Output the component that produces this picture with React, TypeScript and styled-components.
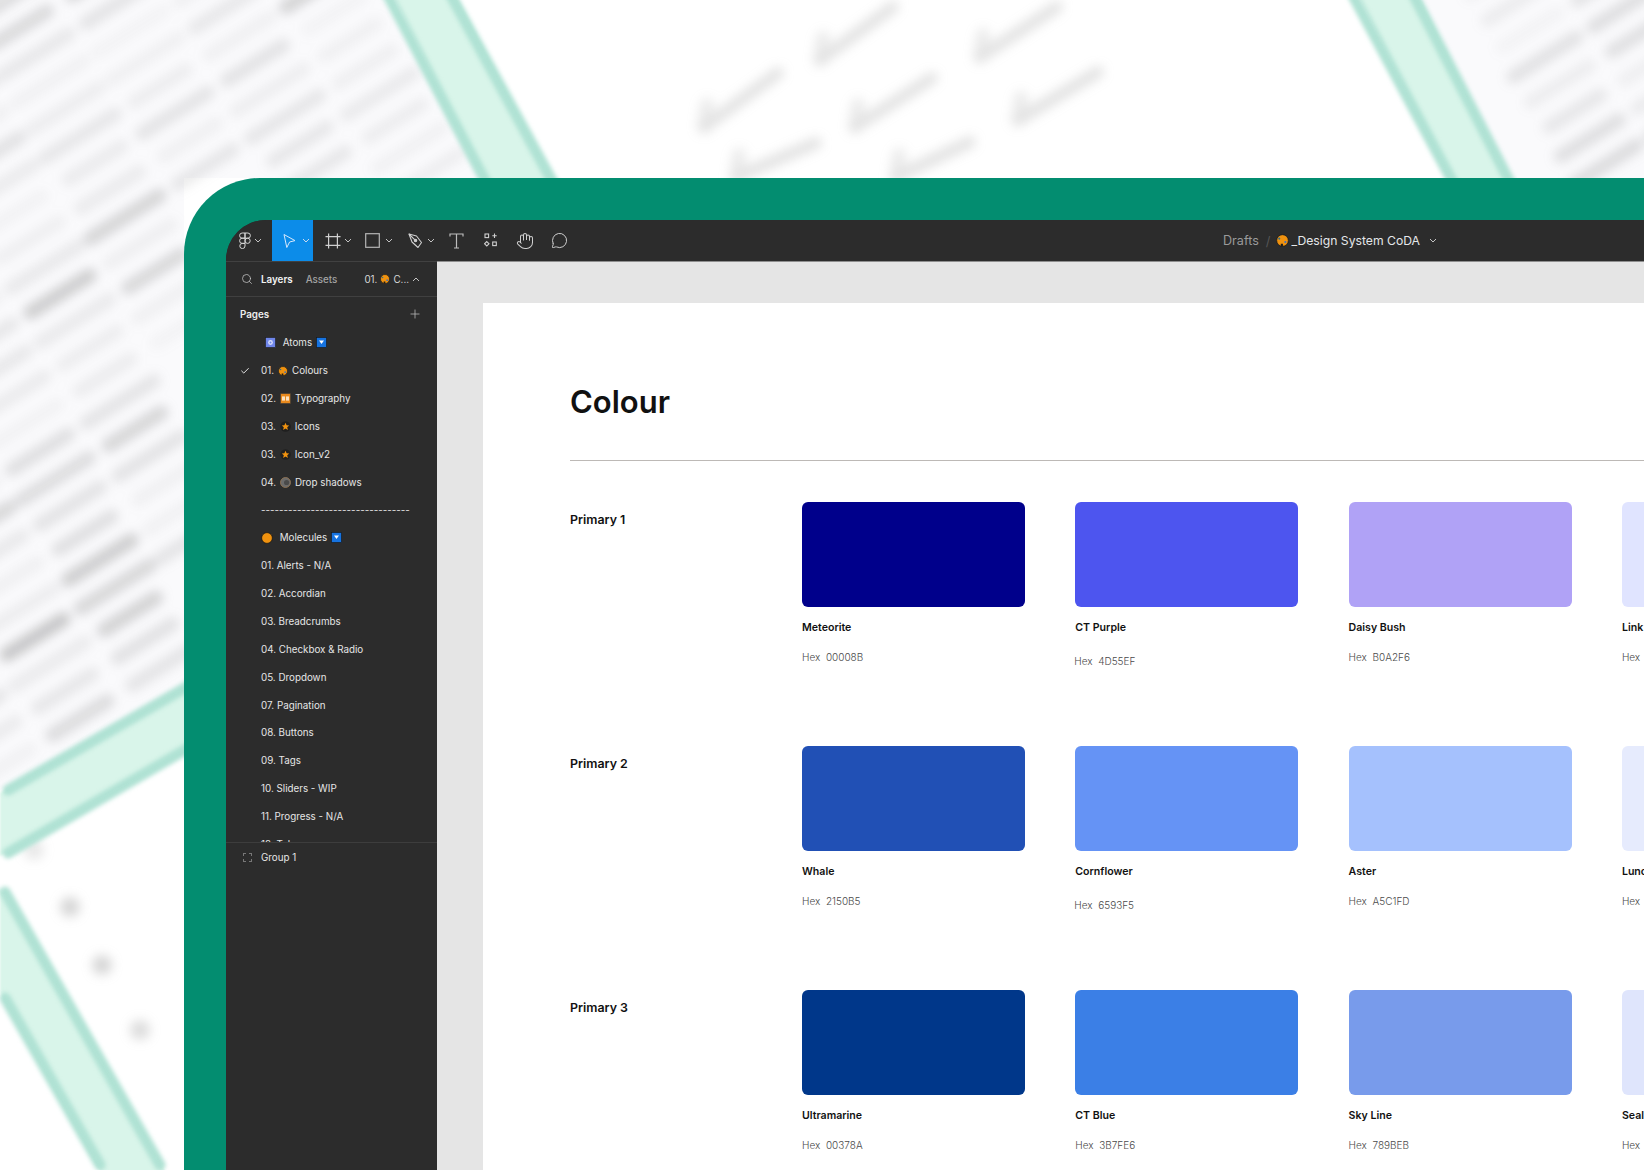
import { ReactNode } from "react";
import styled, { createGlobalStyle } from "styled-components";
import { Hand, MessageCircle, Search, Plus, Check } from "lucide-react";

const GlobalStyle = createGlobalStyle`
  html, body {
    margin: 0;
    padding: 0;
    background: #ffffff;
  }
  body {
    width: 1644px;
    height: 1170px;
    overflow: hidden;
    font-family: Inter, "Liberation Sans", sans-serif;
  }
  * { box-sizing: border-box; }
`;

/* ---------- blurred backdrop ---------- */

const noise = (a: number, b: number) => {
  const v = Math.sin(a * 127.1 + b * 311.7) * 43758.5453;
  return v - Math.floor(v);
};

const inLeftZone = (x: number, y: number) => {
  if (y < 178) return x < 378 + 0.56 * y;
  return x < 200 && y < 780 - 0.556 * x;
};
const inRightZone = (x: number, y: number) => x > 1432 + 0.54 * y && y < 190;

const capsules = () => {
  const out: ReactNode[] = [];
  for (let i = -8; i < 22; i++) {
    for (let j = -22; j < 42; j++) {
      const cx = 105 + i * 80 + j * 15;
      const cy = 375 - i * 50 + j * 27;
      if (cy < -30 || !(inLeftZone(cx, cy) || inRightZone(cx, cy))) continue;
      const len = 30 + noise(i, j) * 12;
      out.push(
        <line
          key={`${i}-${j}`}
          x1={cx - len * 0.85}
          y1={cy + len * 0.53}
          x2={cx + len * 0.85}
          y2={cy - len * 0.53}
          stroke="#6e6e6e"
          strokeWidth={14}
          strokeLinecap="round"
          opacity={0.05 + noise(j, i + 3) * noise(i + 9, j) * 0.34}
        />,
      );
    }
  }
  return out;
};

const ticks = [
  [820, 60, 893, 7],
  [980, 57, 1057, 7],
  [704, 127, 778, 73],
  [855, 127, 932, 78],
  [1018, 120, 1098, 72],
  [736, 177, 816, 143],
  [896, 177, 970, 142],
];

const Backdrop = styled.svg`
  position: absolute;
  left: 0;
  top: 0;
  width: 1644px;
  height: 1170px;
`;

const Blurred = styled.g<{ $r: number }>`
  filter: blur(${(p) => p.$r}px);
`;

const Background = () => (
  <Backdrop viewBox="0 0 1644 1170">
    <polygon points="0,0 384,0 484,178 184,178 184,688 0,790" fill="#fafafc" />
    <polygon points="1416,0 1644,0 1644,178 1508,178" fill="#fafafc" />
    <Blurred $r={5.5}>
      {capsules()}
      {ticks.map(([a, b, c, d]) => (
        <g key={a + b} stroke="#8a8a8a" strokeLinecap="round" opacity="0.24">
          <line x1={a} y1={b} x2={c} y2={d} strokeWidth="12" />
          <line x1={a} y1={b} x2={a + 3} y2={b - 22} strokeWidth="14" opacity="0.7" />
        </g>
      ))}
      <circle cx="70" cy="907" r="10" fill="#8a8a8a" opacity="0.35" />
      <circle cx="102" cy="965" r="10" fill="#8a8a8a" opacity="0.35" />
      <circle cx="140" cy="1030" r="10" fill="#8a8a8a" opacity="0.3" />
      <circle cx="34" cy="850" r="10" fill="#8a8a8a" opacity="0.2" />
    </Blurred>
    <Blurred $r={1}>
      <polygon points="390,-10 453,-10 557,190 490,190" fill="#d9f5ea" />
      <polygon points="1355,-10 1416,-10 1512,190 1455,190" fill="#d9f5ea" />
      <polygon points="0,793 190,685 190,748 0,856" fill="#d9f5ea" />
      <polygon points="0,887 170,1180 105,1180 0,992" fill="#d9f5ea" />
    </Blurred>
    <Blurred $r={2}>
      <g stroke="#b0e2d4" strokeWidth="11" strokeLinecap="round">
        <line x1="385" y1="-10" x2="490" y2="190" />
        <line x1="448" y1="-10" x2="557" y2="190" />
        <line x1="1350" y1="-10" x2="1457" y2="190" />
        <line x1="1411" y1="-10" x2="1514" y2="190" />
        <line x1="8" y1="790" x2="190" y2="685" />
        <line x1="8" y1="853" x2="190" y2="747" />
        <line x1="5" y1="892" x2="160" y2="1165" />
        <line x1="5" y1="998" x2="100" y2="1165" />
      </g>
    </Blurred>
  </Backdrop>
);

/* ---------- small page icons ---------- */

const Palette = ({ size = 11 }: { size?: number }) => (
  <svg width={size} height={size} viewBox="0 0 12 12">
    <circle cx="6" cy="6" r="5.4" fill="#f0920f" stroke="#1c1c1c" strokeWidth="0.8" />
    <circle cx="3" cy="4.2" r="1" fill="#2e6f8e" />
    <circle cx="8.6" cy="7.4" r="1" fill="#3b6fc4" />
    <rect x="4.4" y="9" width="2" height="2.4" fill="#1c1c1c" />
  </svg>
);

const AtomBadge = () => (
  <svg width="11" height="11" viewBox="0 0 11 11">
    <rect x="0.5" y="0.5" width="10" height="10" fill="#6f86ea" stroke="#1c1c1c" strokeWidth="0.6" />
    <circle cx="5.5" cy="5.5" r="2.4" fill="#d7defc" />
    <circle cx="5.5" cy="5.5" r="1" fill="#6f86ea" />
  </svg>
);

const BlueBadge = () => (
  <svg width="11" height="11" viewBox="0 0 11 11">
    <rect x="0.5" y="0.5" width="10" height="10" fill="#1673e0" stroke="#151515" strokeWidth="0.6" />
    <polygon points="3,3.6 8,3.6 5.5,7" fill="#ffffff" />
  </svg>
);

const TypeBadge = () => (
  <svg width="11" height="11" viewBox="0 0 11 11">
    <rect x="0.5" y="0.5" width="10" height="10" fill="#e8891d" stroke="#3a3a3a" strokeWidth="0.6" />
    <rect x="2" y="3.4" width="3" height="4.2" fill="#fbe2c0" />
    <rect x="6" y="3.4" width="3" height="4.2" fill="#fbe2c0" />
  </svg>
);

const StarBadge = () => (
  <svg width="11" height="11" viewBox="0 0 11 11">
    <circle cx="5.5" cy="5.5" r="5.2" fill="#1f1f1f" />
    <polygon
      points="5.5,1.8 6.6,4.3 9.2,4.5 7.2,6.2 7.9,8.9 5.5,7.5 3.1,8.9 3.8,6.2 1.8,4.5 4.4,4.3"
      fill="#f0920f"
    />
  </svg>
);

const ShadowBadge = () => (
  <svg width="11" height="11" viewBox="0 0 11 11">
    <circle cx="5.5" cy="5.5" r="5" fill="#6b6b6b" stroke="#9a7a55" strokeWidth="0.8" />
    <circle cx="6.6" cy="5.5" r="2.6" fill="#4a4a4a" />
  </svg>
);

const OrangeDot = () => (
  <svg width="12" height="12" viewBox="0 0 12 12">
    <circle cx="6" cy="6" r="5.4" fill="#f0920f" stroke="#151515" strokeWidth="0.8" />
  </svg>
);

const Chevron = ({ up, bright }: { up?: boolean; bright?: boolean }) => (
  <svg width="8" height="5" viewBox="0 0 8 5" fill="none">
    <path
      d={up ? "M1 4 L4 1 L7 4" : "M1 1 L4 4 L7 1"}
      stroke={bright ? "#c9d9ee" : "#c4c4c4"}
      strokeWidth="1"
    />
  </svg>
);

/* ---------- toolbar icons ---------- */

const FigmaMark = () => (
  <svg width="12" height="17" viewBox="0 0 12 17" fill="none" stroke="#d6d6d6" strokeWidth="1">
    <path d="M6 1 H3.2 a2.6 2.6 0 0 0 0 5.2 H6 Z" />
    <path d="M6 1 H8.8 a2.6 2.6 0 0 1 0 5.2 H6 Z" />
    <path d="M6 6.2 H3.2 a2.6 2.6 0 0 0 0 5.2 H6 Z" />
    <circle cx="8.6" cy="8.8" r="2.6" />
    <path d="M6 11.4 H3.2 a2.6 2.6 0 1 0 2.8 2.6 Z" />
  </svg>
);

const Cursor = () => (
  <svg width="16" height="16" viewBox="0 0 16 16" fill="none" stroke="#d8e8fb" strokeWidth="1">
    <path d="M3 1.5 L14 7.6 L8.6 9 L5.8 14.5 Z" strokeLinejoin="round" />
  </svg>
);

const FrameTool = () => (
  <svg width="16" height="16" viewBox="0 0 16 16" fill="none" stroke="#d0d0d0" strokeWidth="1.2">
    <path d="M3.6 0.5 V15.5 M12.4 0.5 V15.5 M0.5 3.6 H15.5 M0.5 12.4 H15.5" />
  </svg>
);

const RectTool = () => (
  <svg width="15" height="15" viewBox="0 0 15 15" fill="none" stroke="#b5b5b5" strokeWidth="1.2">
    <rect x="0.7" y="0.7" width="13.6" height="13.6" />
  </svg>
);

const PenTool = () => (
  <svg width="15" height="16" viewBox="0 0 15 16" fill="none" stroke="#cfcfcf" strokeWidth="1.1">
    <path d="M1 1 L8.5 3 L13.5 9.5 L10 14.5 L4 9 Z" strokeLinejoin="round" />
    <circle cx="7.5" cy="7.5" r="1.2" fill="#cfcfcf" />
    <path d="M1 1 L6.6 6.6" />
  </svg>
);

const TextTool = () => (
  <svg width="15" height="16" viewBox="0 0 15 16" fill="none" stroke="#bdbdbd" strokeWidth="1.2">
    <path d="M1 3.5 V1 H14 V3.5 M7.5 1 V15 M5 15 H10" />
  </svg>
);

const ComponentsTool = () => (
  <svg width="14" height="15" viewBox="0 0 14 15" fill="none" stroke="#d0d0d0" strokeWidth="1.1">
    <rect x="1" y="1" width="3.6" height="3.6" />
    <path d="M10.5 0.6 V5 M8.3 2.8 H12.7" />
    <path d="M2.8 8.6 L5 10.8 L2.8 13 L0.6 10.8 Z" />
    <rect x="8.7" y="9" width="3.6" height="3.6" />
  </svg>
);

/* ---------- layout ---------- */

const Page = styled.div`
  position: relative;
  width: 1644px;
  height: 1170px;
  overflow: hidden;
`;

const GreenFrame = styled.div`
  position: relative;
  margin: 178px 0 0 184px;
  width: 1460px;
  height: 992px;
  padding: 42px 0 0 42px;
  background: #038d70;
  border-top-left-radius: 76px;
`;

const Window = styled.div`
  display: flex;
  flex-direction: column;
  height: 100%;
  background: #2c2c2c;
  border-top-left-radius: 40px;
  overflow: hidden;
`;

const Toolbar = styled.div`
  display: flex;
  align-items: stretch;
  flex: 0 0 41px;
  background: #2c2c2c;
`;

const ToolMenu = styled.div<{ $w: number; $pad: number; $gap: number; $active?: boolean }>`
  display: flex;
  align-items: center;
  flex: 0 0 ${(p) => p.$w}px;
  padding-left: ${(p) => p.$pad}px;
  gap: ${(p) => p.$gap}px;
  background: ${(p) => (p.$active ? "#0c8ce9" : "transparent")};
`;

const ToolSlot = styled.div`
  display: flex;
  align-items: center;
  justify-content: center;
  flex: 0 0 34.5px;
  color: #cfcfcf;
`;

const ToolSpacer = styled.div`
  flex: 0 0 3px;
`;

const Crumbs = styled.div`
  display: flex;
  align-items: center;
  margin-left: 646px;
  line-height: 16px;
  white-space: nowrap;
`;

const CrumbMuted = styled.span`
  color: #9a9a9a;
  font-size: 12.6px;
`;

const CrumbSlash = styled.span`
  margin: 0 6px 0 7px;
  color: #555555;
  font-size: 13px;
`;

const CrumbTitle = styled.span`
  margin: 0 9px 0 2px;
  color: #e4e7ea;
  font-size: 12.2px;
`;

const Body = styled.div`
  display: flex;
  flex: 1;
  min-height: 0;
`;

const Sidebar = styled.aside`
  display: flex;
  flex-direction: column;
  flex: 0 0 211px;
  background: #2c2c2c;
  border-top: 1px solid #414141;
  color: #e6e6e6;
  font-size: 9.8px;
  font-weight: 400;
`;

const Tabs = styled.div`
  display: flex;
  align-items: center;
  flex: 0 0 35px;
  padding-left: 15px;
  border-bottom: 1px solid #404040;
`;

const TabLabel = styled.span<{ $on?: boolean }>`
  margin-left: ${(p) => (p.$on ? 8 : 13)}px;
  color: ${(p) => (p.$on ? "#f2f2f2" : "#a3a3a3")};
  font-weight: ${(p) => (p.$on ? 600 : 500)};
`;

const CurrentPage = styled.div`
  display: flex;
  align-items: center;
  gap: 3px;
  margin-left: 27px;
  color: #d8d8d8;
`;

const PagesHeader = styled.div`
  display: flex;
  align-items: center;
  justify-content: space-between;
  flex: 0 0 32px;
  padding: 2px 15px 0 14px;
  font-weight: 600;
  color: #eeeeee;
`;

const PagesList = styled.div`
  flex: 0 0 514px;
  overflow: hidden;
  border-bottom: 1px solid #3d3d3d;
`;

const PageRow = styled.div<{ $pad?: number }>`
  display: flex;
  align-items: center;
  gap: 4px;
  height: 27.87px;
  padding-left: ${(p) => p.$pad ?? 35}px;
  white-space: nowrap;
`;

const CheckSlot = styled.span`
  position: relative;
  display: flex;
  margin-left: -21px;
  margin-right: 7px;
  color: #e6e6e6;
`;

const LayerRow = styled.div`
  display: flex;
  align-items: center;
  height: 29px;
  padding-left: 17px;
  gap: 9px;
`;

const DashedBox = styled.span`
  width: 9px;
  height: 9px;
  border: 1px dashed #777777;
`;

const Canvas = styled.main`
  flex: 1;
  min-width: 0;
  padding: 41px 0 0 46px;
  background: #e5e5e5;
  border-top: 1px solid #8f8f8f;
`;

const Sheet = styled.section`
  height: 100%;
  padding-left: 87px;
  background: #ffffff;
  overflow: hidden;
  color: #111111;
`;

const Title = styled.h1`
  margin: 0;
  padding-top: 81px;
  height: 158px;
  font-size: 31px;
  line-height: 36px;
  font-weight: 600;
  border-bottom: 1px solid #bdb9b6;
`;

const Rows = styled.div`
  display: flex;
  flex-direction: column;
  padding-top: 41px;
`;

const SwatchRow = styled.div`
  display: flex;
  height: 244px;
`;

const RowLabel = styled.div`
  flex: 0 0 232px;
  padding-top: 9.5px;
  font-size: 12.4px;
  line-height: 16px;
  font-weight: 600;
`;

const Swatch = styled.div`
  flex: 0 0 223px;
  margin-right: 50.3px;
`;

const Chip = styled.div<{ $color: string }>`
  height: 105px;
  background: ${(p) => p.$color};
  border-radius: 6px;
`;

const SwatchName = styled.div`
  margin-top: 13.5px;
  font-size: 10.6px;
  line-height: 14px;
  font-weight: 600;
  white-space: nowrap;
`;

const SwatchHex = styled.div<{ $low?: boolean }>`
  margin-top: ${(p) => (p.$low ? 19 : 15)}px;
  margin-left: ${(p) => (p.$low ? -1 : 0)}px;
  font-size: 10px;
  line-height: 14px;
  font-weight: 300;
  color: #4a4a4a;
  white-space: pre;
`;

/* ---------- data ---------- */

const swatchRows = [
  {
    label: "Primary 1",
    items: [
      { name: "Meteorite", color: "#00008B", hex: "Hex  00008B" },
      { name: "CT Purple", color: "#4D55EF", hex: "Hex  4D55EF", low: true },
      { name: "Daisy Bush", color: "#B0A2F6", hex: "Hex  B0A2F6" },
      { name: "Link", color: "#E0E4FF", hex: "Hex" },
    ],
  },
  {
    label: "Primary 2",
    items: [
      { name: "Whale", color: "#2150B5", hex: "Hex  2150B5" },
      { name: "Cornflower", color: "#6593F5", hex: "Hex  6593F5", low: true },
      { name: "Aster", color: "#A5C1FD", hex: "Hex  A5C1FD" },
      { name: "Lunc", color: "#E6EBFD", hex: "Hex" },
    ],
  },
  {
    label: "Primary 3",
    items: [
      { name: "Ultramarine", color: "#00378A", hex: "Hex  00378A" },
      { name: "CT Blue", color: "#3B7FE6", hex: "Hex  3B7FE6" },
      { name: "Sky Line", color: "#789BEB", hex: "Hex  789BEB" },
      { name: "Seal", color: "#DFE5FC", hex: "Hex" },
    ],
  },
];

const plainPages = [
  "01. Alerts - N/A",
  "02. Accordian",
  "03. Breadcrumbs",
  "04. Checkbox & Radio",
  "05. Dropdown",
  "07. Pagination",
  "08. Buttons",
  "09. Tags",
  "10. Sliders - WIP",
  "11. Progress - N/A",
  "12. Tabs",
];

export default function App() {
  return (
    <Page>
      <GlobalStyle />
      <Background />
      <GreenFrame>
        <Window>
          <Toolbar>
            <ToolMenu $w={46} $pad={13} $gap={3}>
              <FigmaMark />
              <Chevron />
            </ToolMenu>
            <ToolMenu $w={41} $pad={9} $gap={5} $active>
              <Cursor />
              <Chevron bright />
            </ToolMenu>
            <ToolMenu $w={41} $pad={11.5} $gap={3.5}>
              <FrameTool />
              <Chevron />
            </ToolMenu>
            <ToolMenu $w={41} $pad={10.7} $gap={5}>
              <RectTool />
              <Chevron />
            </ToolMenu>
            <ToolMenu $w={41} $pad={12.5} $gap={4}>
              <PenTool />
              <Chevron />
            </ToolMenu>
            <ToolSpacer />
            <ToolSlot>
              <TextTool />
            </ToolSlot>
            <ToolSlot>
              <ComponentsTool />
            </ToolSlot>
            <ToolSlot>
              <Hand size={18} strokeWidth={1.4} />
            </ToolSlot>
            <ToolSlot>
              <MessageCircle size={17} strokeWidth={1.4} />
            </ToolSlot>
            <Crumbs>
              <CrumbMuted>Drafts</CrumbMuted>
              <CrumbSlash>/</CrumbSlash>
              <Palette size={13} />
              <CrumbTitle>_Design System CoDA</CrumbTitle>
              <Chevron />
            </Crumbs>
          </Toolbar>
          <Body>
            <Sidebar>
              <Tabs>
                <Search size={12} strokeWidth={1.5} color="#c8c8c8" />
                <TabLabel $on>Layers</TabLabel>
                <TabLabel>Assets</TabLabel>
                <CurrentPage>
                  01. <Palette size={10} /> C...
                  <Chevron up />
                </CurrentPage>
              </Tabs>
              <PagesHeader>
                Pages
                <Plus size={14} strokeWidth={1.3} color="#bdbdbd" />
              </PagesHeader>
              <PagesList>
                <PageRow $pad={39}>
                  <AtomBadge />
                  <span>&nbsp;Atoms</span>
                  <BlueBadge />
                </PageRow>
                <PageRow>
                  <CheckSlot>
                    <Check size={10} strokeWidth={2.4} />
                  </CheckSlot>
                  01. <Palette size={10} /> Colours
                </PageRow>
                <PageRow>
                  02. <TypeBadge /> Typography
                </PageRow>
                <PageRow>
                  03. <StarBadge /> Icons
                </PageRow>
                <PageRow>
                  03. <StarBadge /> Icon_v2
                </PageRow>
                <PageRow>
                  04. <ShadowBadge /> Drop shadows
                </PageRow>
                <PageRow>---------------------------------</PageRow>
                <PageRow>
                  <OrangeDot />
                  <span>&nbsp;Molecules</span>
                  <BlueBadge />
                </PageRow>
                {plainPages.map((name) => (
                  <PageRow key={name}>{name}</PageRow>
                ))}
              </PagesList>
              <LayerRow>
                <DashedBox />
                Group 1
              </LayerRow>
            </Sidebar>
            <Canvas>
              <Sheet>
                <Title>Colour</Title>
                <Rows>
                  {swatchRows.map((row) => (
                    <SwatchRow key={row.label}>
                      <RowLabel>{row.label}</RowLabel>
                      {row.items.map((item) => (
                        <Swatch key={item.name}>
                          <Chip $color={item.color} />
                          <SwatchName>{item.name}</SwatchName>
                          <SwatchHex $low={item.low}>{item.hex}</SwatchHex>
                        </Swatch>
                      ))}
                    </SwatchRow>
                  ))}
                </Rows>
              </Sheet>
            </Canvas>
          </Body>
        </Window>
      </GreenFrame>
    </Page>
  );
}
